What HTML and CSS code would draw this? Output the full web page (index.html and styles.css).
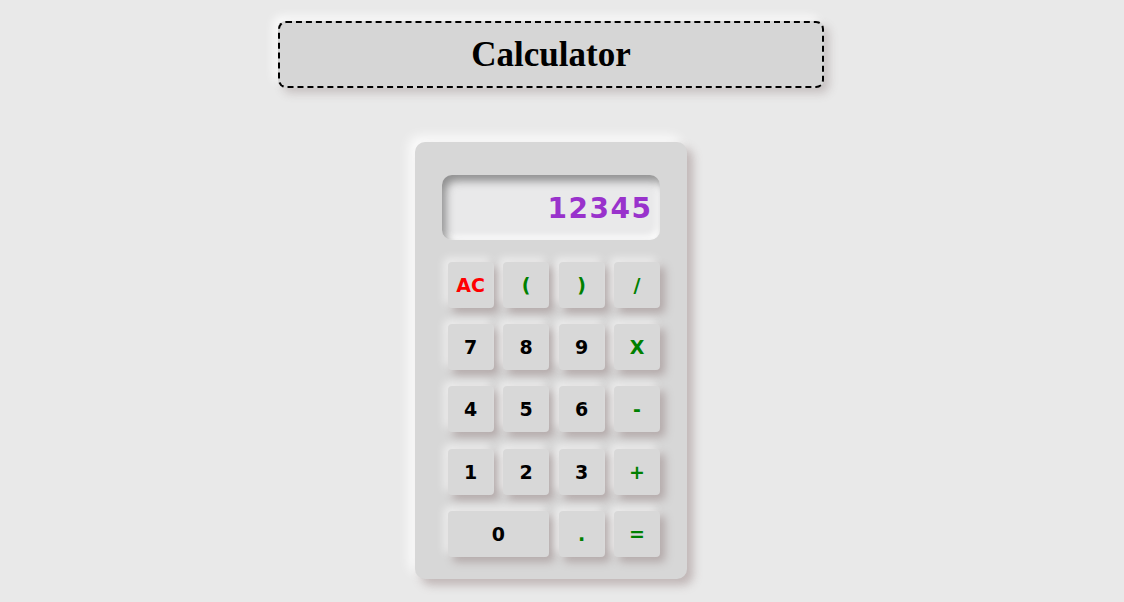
FILE: index.html
```html
<!DOCTYPE html>
<html>
<head>
<meta charset="utf-8">
<link rel="stylesheet" href="styles.css">
</head>
<body>
<div class="page">
  <h1 class="title">Calculator</h1>
  <div class="calc">
    <div class="display">12345</div>
    <div class="keys">
      <button class="key red">AC</button>
      <button class="key op">(</button>
      <button class="key op">)</button>
      <button class="key op">/</button>
      <button class="key">7</button>
      <button class="key">8</button>
      <button class="key">9</button>
      <button class="key op">X</button>
      <button class="key">4</button>
      <button class="key">5</button>
      <button class="key">6</button>
      <button class="key op">-</button>
      <button class="key">1</button>
      <button class="key">2</button>
      <button class="key">3</button>
      <button class="key op">+</button>
      <button class="key wide">0</button>
      <button class="key op">.</button>
      <button class="key op">=</button>
    </div>
  </div>
</div>
</body>
</html>
```
FILE: styles.css
```css
html, body {
  margin: 0;
  padding: 0;
  background: #e9e9e9;
}
.page {
  width: 1099px;
  height: 602px;
  display: flex;
  flex-direction: column;
  align-items: center;
  overflow: hidden;
}
.title {
  box-sizing: border-box;
  width: 546px;
  height: 67px;
  margin: 21px 0 0 3px;
  border: 2px dashed #000;
  border-radius: 8px;
  background: #d6d6d6;
  box-shadow: 5px 5px 10px rgba(120, 100, 100, 0.3), -5px -5px 10px rgba(255, 255, 255, 0.8);
  font-family: "Liberation Serif", serif;
  font-size: 35px;
  font-weight: bold;
  color: #000;
  display: flex;
  align-items: center;
  justify-content: center;
  padding-top: 1px;
}
.calc {
  box-sizing: border-box;
  width: 272px;
  height: 437px;
  margin: 54px 0 0 2px;
  background: #d7d7d7;
  border-radius: 10px;
  box-shadow: 6px 6px 10px rgba(130, 105, 105, 0.4), -6px -6px 12px rgba(255, 255, 255, 0.85);
  padding: 33px 27px 0 27px;
}
.display {
  box-sizing: border-box;
  height: 65px;
  width: 218px;
  border-radius: 10px;
  background: #e9e9ea;
  box-shadow: inset 4px 6px 8px rgba(70, 70, 70, 0.55), inset -3px -4px 6px rgba(255, 255, 255, 0.9);
  font-family: "DejaVu Sans", Verdana, sans-serif;
  font-weight: bold;
  font-size: 28px;
  letter-spacing: 1.5px;
  color: #9932cc;
  display: flex;
  align-items: center;
  justify-content: flex-end;
  padding: 2px 7px 0 0;
}
.keys {
  margin: 22px 0 0 6px;
  display: grid;
  grid-template-columns: repeat(4, 46px);
  grid-auto-rows: 46px;
  column-gap: 9.5px;
  row-gap: 16.2px;
}
.key {
  border: none;
  margin: 0;
  padding: 0;
  border-radius: 4px;
  background: #d8d8d8;
  box-shadow: 5px 5px 9px rgba(125, 100, 100, 0.4), -4px -4px 9px rgba(255, 255, 255, 0.6);
  font-family: "DejaVu Sans", Verdana, sans-serif;
  font-weight: bold;
  font-size: 19px;
  color: #000;
  display: flex;
  align-items: center;
  justify-content: center;
}
.key.op {
  color: #008000;
}
.key.red {
  color: #ff0000;
}
.key.wide {
  grid-column: span 2;
}
```
